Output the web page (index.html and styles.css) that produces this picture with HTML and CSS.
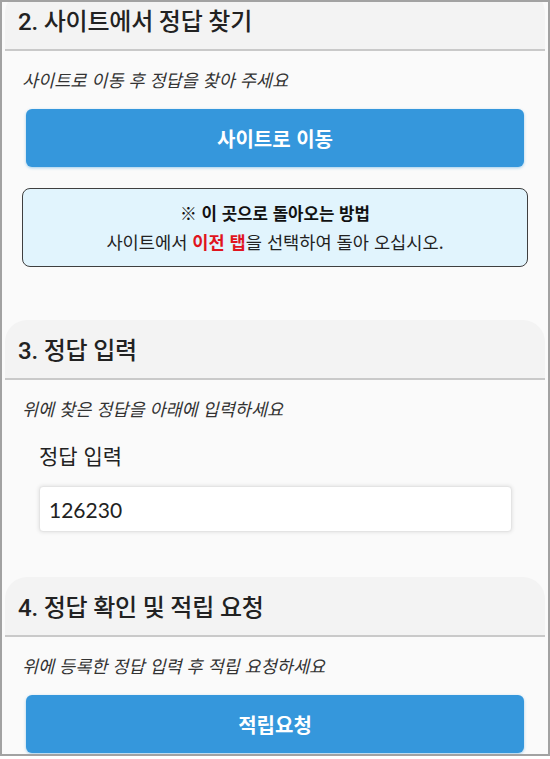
FILE: index.html
```html
<!DOCTYPE html>
<html lang="ko">
<head>
<meta charset="utf-8">
<title>정답 찾기</title>
<link rel="stylesheet" href="styles.css">
</head>
<body>
<div class="frame">
  <div class="content">
    <section class="card">
      <h2 class="card-head">2. 사이트에서 정답 찾기</h2>
      <div class="card-body">
        <p class="hint">사이트로 이동 후 정답을 찾아 주세요</p>
        <button class="btn" type="button">사이트로 이동</button>
        <div class="notice">
          <p class="notice-title">※ 이 곳으로 돌아오는 방법</p>
          <p class="notice-text">사이트에서 <strong class="red">이전 탭</strong>을 선택하여 돌아 오십시오.</p>
        </div>
      </div>
    </section>
    <section class="card">
      <h2 class="card-head">3. 정답 입력</h2>
      <div class="card-body">
        <p class="hint">위에 찾은 정답을 아래에 입력하세요</p>
        <div class="field">
          <label class="field-label" for="answer">정답 입력</label>
          <input class="field-input" id="answer" type="text" value="126230">
        </div>
      </div>
    </section>
    <section class="card">
      <h2 class="card-head">4. 정답 확인 및 적립 요청</h2>
      <div class="card-body">
        <p class="hint">위에 등록한 정답 입력 후 적립 요청하세요</p>
        <button class="btn" type="button">적립요청</button>
      </div>
    </section>
  </div>
</div>
</body>
</html>
```
FILE: styles.css
```css
* { box-sizing: border-box; }
html, body {
  margin: 0;
  padding: 0;
  background: #ffffff;
}
body {
  font-family: "Noto Sans CJK KR", "Noto Sans", sans-serif;
  color: #222;
}
.frame {
  width: 550px;
  height: 756px;
  border: 2px solid #a2a2a2;
  background: #fafafa;
  overflow: hidden;
}
.content {
  margin-top: -11px;
  padding: 0 3px;
  display: flex;
  flex-direction: column;
}
.card {
  display: flex;
  flex-direction: column;
}
.card-head {
  margin: 0;
  height: 60px;
  padding: 0 13px 2px;
  display: flex;
  align-items: center;
  background: #f3f3f3;
  border-bottom: 2px solid #c9c9c9;
  border-radius: 22px 22px 0 0;
  font-family: "Roboto", "Noto Sans CJK KR", sans-serif;
  font-size: 24px;
  font-weight: 500;
  color: #222;
  letter-spacing: -0.2px;
}
.card-body {
  display: flex;
  flex-direction: column;
  padding: 17px 21px 24px 17px;
}
.card + .card { margin-top: 21px; }
.hint {
  margin: 0;
  font-size: 17.5px;
  line-height: 24px;
  font-style: italic;
  color: #333;
}
.btn {
  margin: 17px 0 0 4px;
  height: 58px;
  border: none;
  border-radius: 6px;
  background: #3597dc;
  color: #fff;
  font-family: "Noto Sans CJK KR", sans-serif;
  font-size: 20px;
  font-weight: 700;
  box-shadow: 0 1px 3px rgba(52, 152, 219, 0.45);
}
.notice {
  margin: 21px -4px 8px 0;
  padding: 11px 10px 10px;
  background: #e1f4fd;
  border: 1px solid #3f3f3f;
  border-radius: 8px;
  text-align: center;
}
.notice-title {
  margin: 0;
  font-size: 16.8px;
  font-weight: 700;
  line-height: 27px;
  color: #111;
}
.notice-text {
  margin: 0;
  font-size: 17.6px;
  line-height: 29px;
  color: #222;
}
.red {
  color: #e0141e;
  font-weight: 700;
}
.field {
  display: flex;
  flex-direction: column;
  padding: 0 0 0 17px;
  margin-right: 12px;
}
.field-label {
  margin-top: 19px;
  font-size: 21px;
  line-height: 30px;
  color: #222;
}
.field-input {
  margin-top: 16px;
  height: 46px;
  padding: 0 9px;
  border: 1px solid #e4e4e4;
  border-radius: 4px;
  background: #fff;
  box-shadow: 0 0 4px rgba(0, 0, 0, 0.12);
  font-family: "Lato", sans-serif;
  font-size: 21px;
  color: #222;
}
```
